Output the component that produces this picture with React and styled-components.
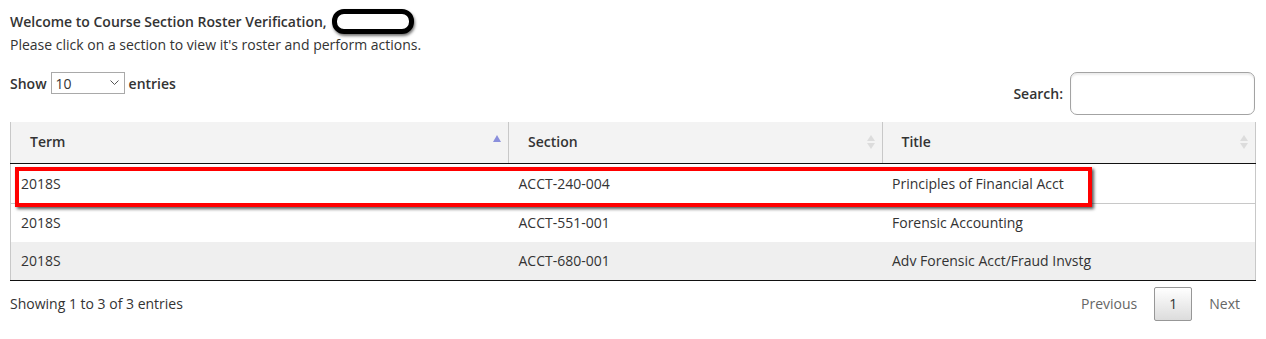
import React from "react";
import styled, { createGlobalStyle } from "styled-components";

const GlobalStyle = createGlobalStyle`
  body {
    margin: 0;
    background: #fff;
    font-family: "Open Sans", "Liberation Sans", sans-serif;
    font-size: 14px;
    color: #333;
  }
`;

const Page = styled.div`
  padding: 9px 10px 0 10px;
`;

const Intro = styled.div`
  line-height: 22px;
`;

const Welcome = styled.div`
  font-weight: 600;
  display: flex;
  align-items: center;
`;

const Redacted = styled.span`
  display: inline-block;
  width: 72px;
  height: 15px;
  margin-left: 5px;
  border: 5px solid #000;
  border-radius: 12px;
  background: #fff;
  box-shadow: 1px 2px 3px rgba(0, 0, 0, 0.55);
`;

const Controls = styled.div`
  display: flex;
  justify-content: space-between;
  align-items: flex-start;
  margin-top: 16px;
`;

const Length = styled.label`
  display: flex;
  align-items: center;
  gap: 4px;
  font-weight: 600;
`;

const SelectBox = styled.span`
  position: relative;
  display: inline-block;
`;

const Select = styled.select`
  appearance: none;
  display: block;
  width: 74px;
  height: 22px;
  border: 1px solid #a9a9a9;
  border-radius: 0;
  background: #fff;
  font-family: inherit;
  font-size: 14px;
  font-weight: 400;
  color: #333;
  padding: 0 4px;
`;

const Chevron = styled.svg`
  position: absolute;
  right: 6px;
  top: 8px;
  pointer-events: none;
`;

const SearchBox = styled.label`
  display: flex;
  align-items: center;
  gap: 7px;
  font-weight: 600;
  margin-right: 1px;
`;

const SearchInput = styled.input`
  width: 185px;
  height: 43px;
  box-sizing: border-box;
  border: 1px solid #a3a3a3;
  border-radius: 7px;
  box-shadow: inset 0 2px 2px #ececec;
  background: #fff;
`;

const TableWrap = styled.div`
  position: relative;
  margin-top: 7px;
`;

const Table = styled.table`
  width: 100%;
  border-collapse: collapse;
  table-layout: fixed;
  border-left: 1px solid #c8c8c8;
  border-right: 1px solid #c8c8c8;
  border-bottom: 1px solid #111;
`;

const Th = styled.th`
  position: relative;
  text-align: left;
  font-weight: 600;
  background: #f3f3f3;
  padding: 9px 18px 10px 19px;
  line-height: 22px;
  border-bottom: 1px solid #111;
  & + & {
    border-left: 1px solid #c8c8c8;
  }
`;

const SortIcon = styled.svg`
  position: absolute;
  right: 7px;
  top: 13px;
`;

const Tr = styled.tr`
  background: ${(p) => (p.$shade ? "#efefef" : "#fff")};
  & + & td {
    border-top: 1px solid #c8c8c8;
  }
  &:first-child td {
    padding-top: 9px;
  }
`;

const Td = styled.td`
  padding: 8px 10px;
  line-height: 22px;
`;

const Highlight = styled.div`
  position: absolute;
  left: 5px;
  top: 45px;
  width: 1077px;
  height: 40px;
  box-sizing: border-box;
  border: 4px solid #f00;
  box-shadow: 2px 2px 3px rgba(0, 0, 0, 0.65);
  pointer-events: none;
`;

const Footer = styled.div`
  display: flex;
  justify-content: space-between;
  align-items: center;
  margin-top: 6px;
`;

const Info = styled.div`
  margin-top: -2px;
`;

const Pager = styled.div`
  display: flex;
  align-items: center;
  margin-right: 1px;
`;

const PageBtn = styled.span`
  padding: 6px 14px;
  line-height: 20px;
  margin-left: 2px;
  border: 1px solid ${(p) => (p.$current ? "#979797" : "transparent")};
  border-radius: 2px;
  color: ${(p) => (p.$current ? "#333" : "#666")};
  background: ${(p) =>
    p.$current ? "linear-gradient(to bottom, #fff 0%, #dcdcdc 100%)" : "transparent"};
`;

const rows = [
  { term: "2018S", section: "ACCT-240-004", title: "Principles of Financial Acct" },
  { term: "2018S", section: "ACCT-551-001", title: "Forensic Accounting" },
  { term: "2018S", section: "ACCT-680-001", title: "Adv Forensic Acct/Fraud Invstg" },
];

function SortArrows({ active }) {
  if (active) {
    return (
      <SortIcon width="8" height="8" viewBox="0 0 8 8">
        <path d="M4 0 L8 7 L0 7 Z" fill="#8a8fdc" />
      </SortIcon>
    );
  }
  return (
    <SortIcon width="8" height="14" viewBox="0 0 8 14">
      <path d="M4 0 L8 6 L0 6 Z" fill="#dcdcdc" />
      <path d="M0 8 L8 8 L4 14 Z" fill="#dcdcdc" />
    </SortIcon>
  );
}

export default function App() {
  return (
    <Page>
      <GlobalStyle />
      <Intro>
        <Welcome>
          Welcome to Course Section Roster Verification,
          <Redacted />
        </Welcome>
        <div>Please click on a section to view it's roster and perform actions.</div>
      </Intro>

      <Controls>
        <Length>
          Show
          <SelectBox>
            <Select defaultValue="10">
              <option>10</option>
              <option>25</option>
              <option>50</option>
              <option>100</option>
            </Select>
            <Chevron width="9" height="6" viewBox="0 0 9 6">
              <path d="M0.5 0.5 L4.5 4.5 L8.5 0.5" fill="none" stroke="#555" strokeWidth="1" />
            </Chevron>
          </SelectBox>
          entries
        </Length>
        <SearchBox>
          Search:
          <SearchInput type="search" />
        </SearchBox>
      </Controls>

      <TableWrap>
        <Table>
          <colgroup>
            <col style={{ width: "40%" }} />
            <col style={{ width: "30%" }} />
            <col style={{ width: "30%" }} />
          </colgroup>
          <thead>
            <tr>
              <Th>
                Term
                <SortArrows active />
              </Th>
              <Th>
                Section
                <SortArrows />
              </Th>
              <Th>
                Title
                <SortArrows />
              </Th>
            </tr>
          </thead>
          <tbody>
            {rows.map((r, i) => (
              <Tr key={r.section} $shade={i === 2}>
                <Td>{r.term}</Td>
                <Td>{r.section}</Td>
                <Td>{r.title}</Td>
              </Tr>
            ))}
          </tbody>
        </Table>
        <Highlight />
      </TableWrap>

      <Footer>
        <Info>Showing 1 to 3 of 3 entries</Info>
        <Pager>
          <PageBtn>Previous</PageBtn>
          <PageBtn $current>1</PageBtn>
          <PageBtn>Next</PageBtn>
        </Pager>
      </Footer>
    </Page>
  );
}
